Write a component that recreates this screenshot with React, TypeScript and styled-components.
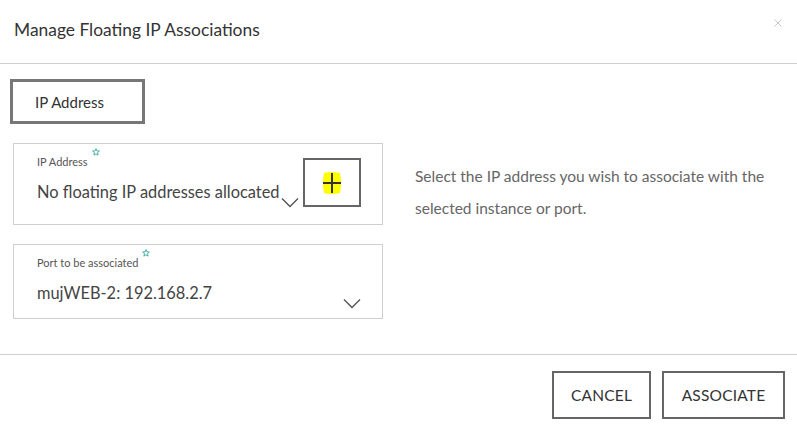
import React from "react";
import styled, { createGlobalStyle } from "styled-components";

const GlobalStyle = createGlobalStyle`
  html, body {
    margin: 0;
    padding: 0;
    background: #fff;
  }
  body {
    font-family: Lato, "Open Sans", "Liberation Sans", sans-serif;
    color: #333;
  }
  * {
    box-sizing: border-box;
  }
`;

const Dialog = styled.div`
  width: 797px;
  height: 433px;
  display: flex;
  flex-direction: column;
  background: #fff;
`;

const Header = styled.div`
  height: 64px;
  display: flex;
  justify-content: space-between;
  align-items: flex-start;
  padding: 19px 15px 0 14px;
  border-bottom: 1px solid #cfcfcf;
`;

const Title = styled.h1`
  margin: 0;
  font-size: 17.4px;
  line-height: 22px;
  font-weight: 400;
  color: #333;
`;

const CloseButton = styled.button`
  border: none;
  background: none;
  padding: 0;
  margin-top: -1px;
  width: 8px;
  height: 10px;
  display: flex;
  align-items: center;
  justify-content: center;
  cursor: pointer;
`;

const Body = styled.div`
  flex: 1;
  padding: 15px 0 0 10px;
  border-bottom: 1px solid #cfcfcf;
`;

const Tab = styled.div`
  width: 135px;
  height: 45px;
  border: 3px solid #777;
  display: flex;
  align-items: center;
  padding-left: 22px;
  font-size: 15px;
  color: #333;
`;

const Content = styled.div`
  display: flex;
  gap: 32px;
  padding: 19px 0 0 3px;
`;

const Fields = styled.div`
  width: 370px;
  display: flex;
  flex-direction: column;
  gap: 19px;
`;

const Field = styled.div<{ $height: number }>`
  height: ${(p) => p.$height}px;
  border: 1px solid #cfcfcf;
  display: flex;
  align-items: flex-start;
  padding: 10px 21px 0 23px;
  gap: 4px;
`;

const FieldMain = styled.div`
  flex: 1;
  min-width: 0;
  display: flex;
  flex-direction: column;
  gap: 12px;
`;

const Label = styled.div`
  font-size: 11px;
  line-height: 16px;
  color: #555;
  display: flex;
  align-items: flex-start;
`;

const Star = styled.svg`
  margin: -6px 0 0 4px;
  width: 8px;
  height: 8px;
`;

const Select = styled.div`
  display: flex;
  align-items: flex-start;
`;

const Value = styled.div`
  flex: 1;
  min-width: 0;
  font-size: 16.4px;
  line-height: 20px;
  color: #444;
  white-space: nowrap;
`;

const Chevron = styled.svg`
  flex: none;
  margin-top: 15px;
  width: 18px;
  height: 11px;
`;

const AddButton = styled.button`
  flex: none;
  width: 58px;
  height: 49px;
  border: 2px solid #666;
  background: #fff;
  display: flex;
  align-items: center;
  justify-content: center;
  padding: 0;
  margin-top: 4px;
  cursor: pointer;
`;

const Help = styled.p`
  margin: 0;
  padding-top: 17px;
  width: 370px;
  font-size: 15.5px;
  line-height: 32px;
  color: #666;
`;

const Footer = styled.div`
  height: 78px;
  display: flex;
  justify-content: flex-end;
  align-items: flex-start;
  gap: 11px;
  padding: 16px 12px 0 0;
`;

const ActionButton = styled.button<{ $width: number }>`
  width: ${(p) => p.$width}px;
  height: 48px;
  border: 2px solid #666;
  background: #fff;
  font-family: inherit;
  font-size: 15.5px;
  color: #333;
  letter-spacing: 0.2px;
  cursor: pointer;
`;

const StarIcon = () => (
  <Star viewBox="0 0 10 10">
    <path
      d="M5 0.8 L6.2 3.6 L9.2 3.8 L6.9 5.8 L7.6 8.9 L5 7.3 L2.4 8.9 L3.1 5.8 L0.8 3.8 L3.8 3.6 Z"
      fill="none"
      stroke="#2fa59a"
      strokeWidth="1.1"
      strokeLinejoin="round"
    />
  </Star>
);

const ChevronIcon = () => (
  <Chevron viewBox="0 0 18 11">
    <path d="M1 1.5 L9 9.5 L17 1.5" fill="none" stroke="#555" strokeWidth="1.4" />
  </Chevron>
);

export default function App() {
  return (
    <>
      <GlobalStyle />
      <Dialog>
        <Header>
          <Title>Manage Floating IP Associations</Title>
          <CloseButton aria-label="Close">
            <svg width="8" height="8" viewBox="0 0 8 8">
              <path d="M0.5 0.5 L7.5 7.5 M7.5 0.5 L0.5 7.5" stroke="#c8c8d0" strokeWidth="1" />
            </svg>
          </CloseButton>
        </Header>
        <Body>
          <Tab>IP Address</Tab>
          <Content>
            <Fields>
              <Field $height={82}>
                <FieldMain>
                  <Label>
                    IP Address
                    <StarIcon />
                  </Label>
                  <Select>
                    <Value>No floating IP addresses allocated</Value>
                    <ChevronIcon />
                  </Select>
                </FieldMain>
                <AddButton aria-label="Allocate IP">
                  <svg width="22" height="24" viewBox="0 0 22 24">
                    <path
                      d="M3 2 Q10 0 19 2 Q21 12 19 22 Q10 24 3 22 Q1 12 3 2 Z"
                      fill="#ffff00"
                    />
                    <path d="M2 12 L20 12 M11 2 L11 22" stroke="#333" strokeWidth="2" />
                  </svg>
                </AddButton>
              </Field>
              <Field $height={75}>
                <FieldMain>
                  <Label>
                    Port to be associated
                    <StarIcon />
                  </Label>
                  <Select>
                    <Value>mujWEB-2: 192.168.2.7</Value>
                    <ChevronIcon />
                  </Select>
                </FieldMain>
              </Field>
            </Fields>
            <Help>
              Select the IP address you wish to associate with the selected
              instance or port.
            </Help>
          </Content>
        </Body>
        <Footer>
          <ActionButton $width={99}>CANCEL</ActionButton>
          <ActionButton $width={123}>ASSOCIATE</ActionButton>
        </Footer>
      </Dialog>
    </>
  );
}
